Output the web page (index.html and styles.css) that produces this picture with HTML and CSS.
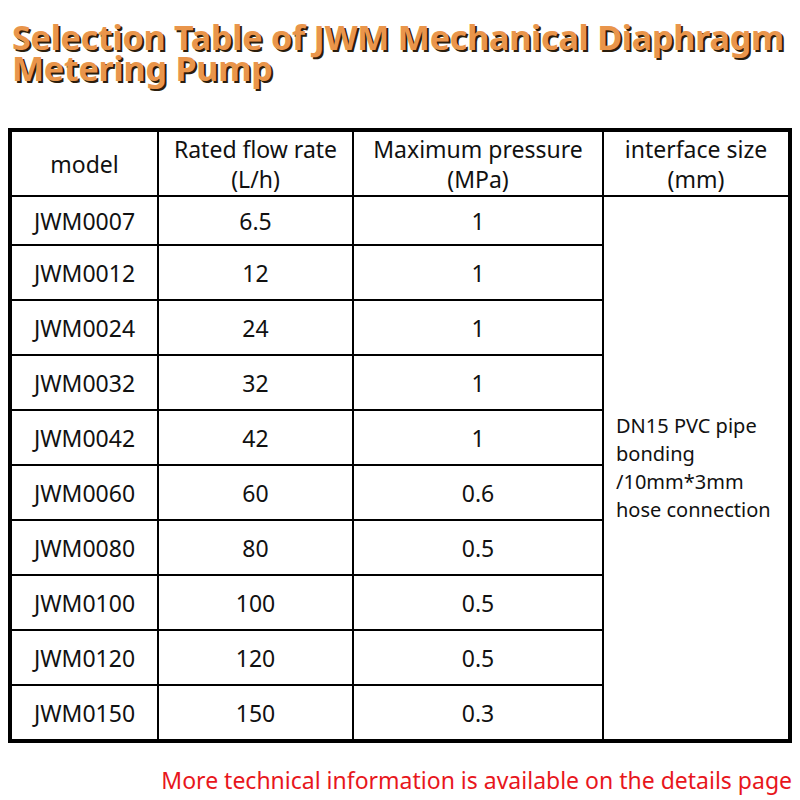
FILE: index.html
```html
<!DOCTYPE html>
<html>
<head>
<meta charset="utf-8">
<link rel="stylesheet" href="styles.css">
</head>
<body>
<div class="page">
  <h1 class="title">Selection Table of JWM Mechanical Diaphragm Metering Pump</h1>
  <table class="spec">
    <colgroup>
      <col class="c1"><col class="c2"><col class="c3"><col class="c4">
    </colgroup>
    <thead>
      <tr class="head">
        <th>model</th>
        <th>Rated flow rate<br>(L/h)</th>
        <th>Maximum pressure<br>(MPa)</th>
        <th class="last">interface size<br>(mm)</th>
      </tr>
    </thead>
    <tbody>
      <tr class="first"><td>JWM0007</td><td>6.5</td><td>1</td><td class="iface last" rowspan="10">DN15 PVC pipe<br>bonding<br>/10mm*3mm<br>hose connection</td></tr>
      <tr><td>JWM0012</td><td>12</td><td>1</td></tr>
      <tr><td>JWM0024</td><td>24</td><td>1</td></tr>
      <tr><td>JWM0032</td><td>32</td><td>1</td></tr>
      <tr><td>JWM0042</td><td>42</td><td>1</td></tr>
      <tr><td>JWM0060</td><td>60</td><td>0.6</td></tr>
      <tr><td>JWM0080</td><td>80</td><td>0.5</td></tr>
      <tr><td>JWM0100</td><td>100</td><td>0.5</td></tr>
      <tr><td>JWM0120</td><td>120</td><td>0.5</td></tr>
      <tr class="end"><td>JWM0150</td><td>150</td><td>0.3</td></tr>
    </tbody>
  </table>
  <p class="note">More technical information is available on the details page</p>
</div>
</body>
</html>
```

FILE: styles.css
```css
html, body {
  margin: 0;
  padding: 0;
  background: #ffffff;
}
.page {
  width: 800px;
  height: 800px;
  font-family: "Noto Sans", "Open Sans", sans-serif;
  color: #111;
  overflow: hidden;
}
.title {
  margin: 0;
  padding: 22px 0 0 12px;
  font-size: 34px;
  line-height: 31px;
  font-weight: 700;
  letter-spacing: -0.2px;
  color: #e9954b;
  text-shadow: 2px 2px 0 #2b1d0c;
  height: 128px;
  box-sizing: border-box;
}
.spec {
  margin-left: 8px;
  width: 784px;
  border: 4px solid #000;
  border-collapse: separate;
  border-spacing: 0;
  table-layout: fixed;
}
.c1 { width: 147px; }
.c2 { width: 195px; }
.c3 { width: 250px; }
.c4 { width: 184px; }
.spec th, .spec td {
  padding: 0;
  text-align: center;
  vertical-align: middle;
  border-right: 2px solid #000;
  border-bottom: 2px solid #000;
  font-weight: 400;
  color: #111;
}
.spec .last { border-right: none; }
.spec .end td { border-bottom: none; }
.head th {
  height: 63px;
  font-size: 23px;
  line-height: 30px;
}
.spec tbody td {
  height: 53px;
  font-size: 23px;
}
.spec tbody .first td { height: 47px; }
.spec td.iface {
  border-bottom: none;
  text-align: left;
  padding-left: 12px;
  font-size: 20px;
  line-height: 28px;
}
.note {
  margin: 22px 8px 0 0;
  text-align: right;
  color: #e8161c;
  font-size: 23px;
  line-height: 30px;
}
```
